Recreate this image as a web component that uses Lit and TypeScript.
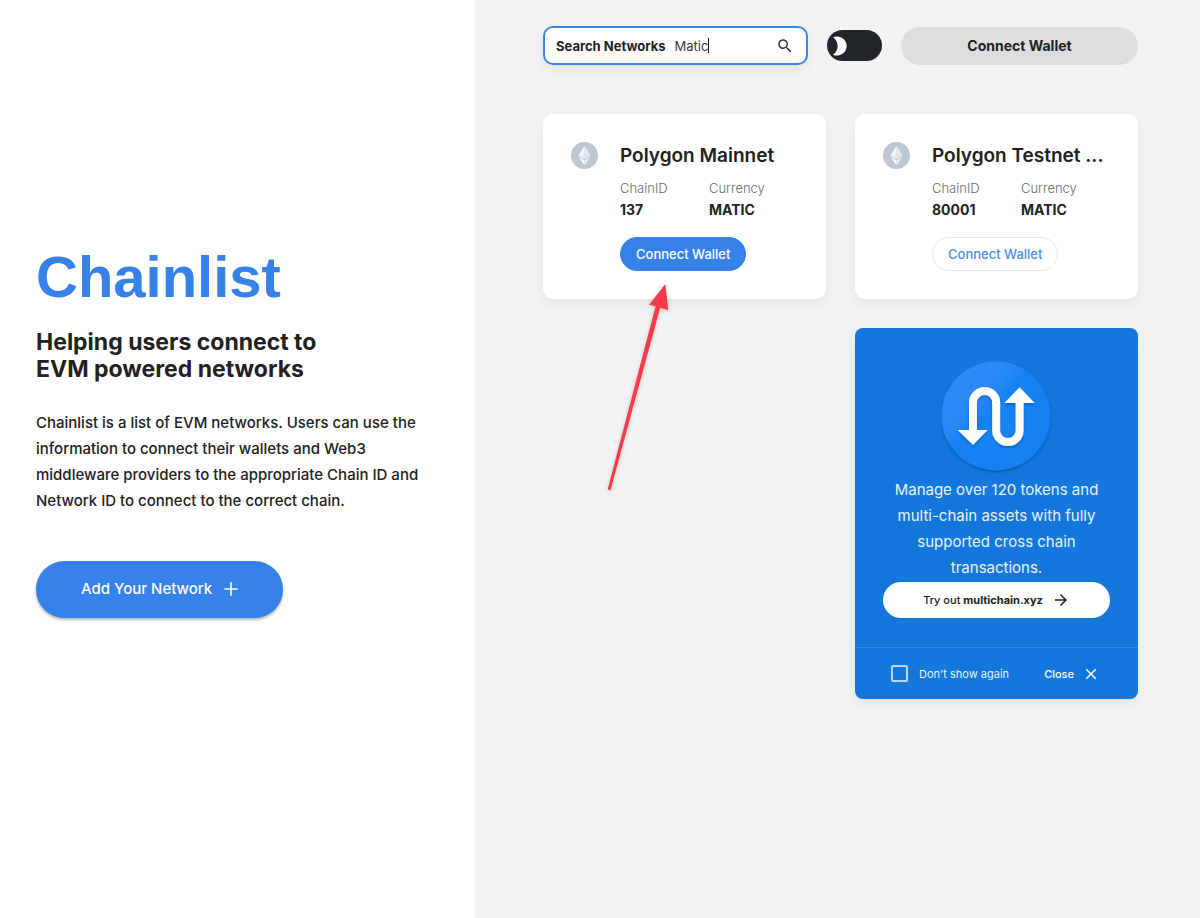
import { LitElement, html, css } from "lit";
import { customElement, property } from "lit/decorators.js";

@customElement("network-card")
class NetworkCard extends LitElement {
  @property() name = "";
  @property() chain = "";
  @property() currency = "";
  @property({ type: Boolean }) primary = false;

  static styles = css`
    :host {
      display: block;
      min-width: 0;
    }
    * {
      box-sizing: border-box;
    }
    .card {
      display: flex;
      gap: 22px;
      padding: 28px;
      background: #fff;
      border-radius: 10px;
      box-shadow: 0 5px 12px rgba(0, 0, 0, 0.06);
    }
    .coin {
      flex: none;
      width: 27px;
      height: 27px;
    }
    .body {
      flex: 1;
      min-width: 0;
    }
    .title {
      margin: 0 0 8px;
      font-size: 19px;
      line-height: 27px;
      font-weight: 600;
      white-space: nowrap;
      overflow: hidden;
      text-overflow: ellipsis;
    }
    .facts {
      display: grid;
      grid-template-columns: 1fr 1fr;
      margin: 0 0 17px;
    }
    .facts dt {
      font-size: 13px;
      line-height: 22px;
      font-weight: 300;
      color: #6d6d6d;
    }
    .facts dd {
      margin: 0;
      font-size: 14px;
      line-height: 21px;
      font-weight: 700;
    }
    .connect {
      height: 34px;
      padding: 0 15px;
      border: 1px solid #e8e8e8;
      border-radius: 17px;
      background: #fff;
      color: #4a8fee;
      font: 500 13px/20px Inter, sans-serif;
      display: block;
    }
    .connect.primary {
      background: #3682ea;
      border-color: #3682ea;
      color: #fff;
    }
  `;

  render() {
    return html`
      <article class="card">
        <svg class="coin" viewBox="0 0 27 27" aria-hidden="true">
          <circle cx="13.5" cy="13.5" r="13.5" fill="#bec5d3" />
          <path d="M13.5 3.700 7.400 13.800l6.100 3.500z" fill="#fafafa" />
          <path d="M13.5 3.700v13.600l6.100-3.500z" fill="#ececee" />
          <path d="M7.400 15 13.5 23.300v-4.900z" fill="#fafafa" />
          <path d="M13.5 18.400v4.900l6.100-8.300z" fill="#ececee" />
          <path d="m7.400 13.800 6.100-2.700v6.200z" fill="#eeeeef" />
          <path d="m13.5 11.100 6.100 2.700-6.100 3.500z" fill="#e2e3e6" />
        </svg>
        <div class="body">
          <h3 class="title">${this.name}</h3>
          <dl class="facts">
            <div><dt>ChainID</dt><dd>${this.chain}</dd></div>
            <div><dt>Currency</dt><dd>${this.currency}</dd></div>
          </dl>
          <button class="connect ${this.primary ? "primary" : ""}" type="button">Connect Wallet</button>
        </div>
      </article>
    `;
  }
}

@customElement("multichain-promo")
class MultichainPromo extends LitElement {
  static styles = css`
    :host {
      display: block;
      min-width: 0;
    }
    * {
      box-sizing: border-box;
    }
    .promo {
      background: #1377dc;
      color: #eaf3fd;
      border-radius: 8px;
      overflow: hidden;
      box-shadow: 0 5px 12px rgba(0, 0, 0, 0.06);
    }
    .main {
      display: flex;
      flex-direction: column;
      align-items: center;
      padding: 32px 28px 29px;
    }
    .logo {
      width: 112px;
      height: 117px;
      display: block;
    }
    .pitch {
      margin: 0;
      font-size: 15px;
      line-height: 26px;
      text-align: center;
      padding-bottom: 1px;
    }
    .try {
      display: flex;
      align-items: center;
      justify-content: center;
      gap: 9px;
      width: 100%;
      height: 36px;
      border-radius: 18px;
      background: #fff;
      color: #212121;
      font-size: 11px;
      font-weight: 500;
      text-decoration: none;
    }
    .try b {
      font-weight: 700;
    }
    .icon {
      width: 18px;
      height: 18px;
      display: block;
    }
    .foot {
      display: flex;
      align-items: center;
      justify-content: space-between;
      height: 52px;
      padding: 0 38px 0 36px;
      border-top: 1px solid #2e87e0;
      font-size: 11px;
    }
    .again {
      display: flex;
      align-items: center;
      gap: 11px;
    }
    .tick {
      appearance: none;
      margin: 0;
      width: 17px;
      height: 17px;
      border: 2px solid #b8d6f5;
      border-radius: 2px;
    }
    .close {
      display: flex;
      align-items: center;
      gap: 8px;
      padding: 0;
      border: 0;
      background: none;
      color: #fff;
      font: 500 11px/16px Inter, sans-serif;
    }
  `;

  render() {
    return html`
      <aside class="promo">
        <div class="main">
          <svg class="logo" viewBox="0 -1 112 117" aria-hidden="true">
            <defs>
              <linearGradient id="disc" x1="0" y1="0.1" x2="0.8" y2="0.9">
                <stop offset="0" stop-color="#2f8df5" />
                <stop offset="0.38" stop-color="#2688f4" />
                <stop offset="0.5" stop-color="#1582f2" />
                <stop offset="1" stop-color="#1582f2" />
              </linearGradient>
              <filter id="soft" x="-10%" y="-10%" width="120%" height="125%">
                <feDropShadow dx="0" dy="1.5" stdDeviation="1" flood-color="#053a75" flood-opacity="0.5" />
              </filter>
            </defs>
            <circle cx="55" cy="55" r="54.5" fill="url(#disc)" filter="url(#soft)" />
            <g filter="url(#soft)">
              <path
                d="M32 71V41.6a11.6 11.6 0 0 1 23.2 0v27.8a11.7 11.7 0 0 0 23.4 0V40"
                fill="none"
                stroke="#fff"
                stroke-width="8"
              />
              <path d="M16.7 69h30L32 84zM63.3 42h30.4L78.6 26.3z" fill="#fff" />
            </g>
          </svg>
          <p class="pitch">
            Manage over 120 tokens and multi-chain assets with fully supported cross chain transactions.
          </p>
          <a class="try" href="#multichain">
            <span>Try out <b>multichain.xyz</b></span>
            <svg class="icon" viewBox="0 0 24 24" fill="currentColor" aria-hidden="true">
              <path d="m12 4-1.41 1.41L16.17 11H4v2h12.17l-5.58 5.59L12 20l8-8z" />
            </svg>
          </a>
        </div>
        <div class="foot">
          <label class="again"><input class="tick" type="checkbox" />Don't show again</label>
          <button class="close" type="button">
            Close
            <svg class="icon" viewBox="0 0 24 24" fill="currentColor" aria-hidden="true">
              <path
                d="M19 6.41 17.59 5 12 10.59 6.41 5 5 6.41 10.59 12 5 17.59 6.41 19 12 13.41 17.59 19 19 17.59 13.41 12z"
              />
            </svg>
          </button>
        </div>
      </aside>
    `;
  }
}

@customElement("app-root")
class AppRoot extends LitElement {
  static styles = css`
    :host {
      display: block;
      font-family: Inter, sans-serif;
      color: #212121;
    }
    * {
      box-sizing: border-box;
    }
    .page {
      display: grid;
      grid-template-columns: 475fr 725fr;
      min-height: 100vh;
    }
    .intro {
      display: flex;
      flex-direction: column;
      justify-content: center;
      align-items: flex-start;
      padding: 0 36px 58px;
      background: #fff;
    }
    .brand {
      margin: 0 0 18px;
      font: 700 58px/68px "Liberation Sans", sans-serif;
      color: #3682ea;
    }
    .tagline {
      margin: 0 0 27px;
      font-size: 23px;
      line-height: 27px;
      font-weight: 700;
    }
    .about {
      margin: 0 0 47px;
      font-size: 15px;
      line-height: 26px;
      font-weight: 500;
    }
    .add {
      display: flex;
      align-items: center;
      gap: 9px;
      height: 57px;
      padding: 0 42px 0 45px;
      border: 0;
      border-radius: 29px;
      background: #3682ea;
      color: #fff;
      font: 500 15px/24px Inter, sans-serif;
      box-shadow: 0 2px 3px rgba(0, 0, 0, 0.3);
    }
    .plus {
      width: 20px;
      height: 20px;
    }
    .content {
      padding: 26px 62px 26px 68px;
      background: #f2f2f2;
    }
    .toolbar {
      display: flex;
      align-items: center;
      gap: 19px;
      margin-bottom: 49px;
    }
    .search {
      flex: 1;
      min-width: 0;
      display: flex;
      align-items: center;
      height: 39px;
      padding: 0 12px 0 11px;
      border: 2px solid #3b85ec;
      border-radius: 10px;
      background: #fff;
      box-shadow: 0 5px 12px rgba(0, 0, 0, 0.06);
      font-size: 13px;
      line-height: 20px;
    }
    .label {
      font-weight: 700;
      margin-right: 9px;
      white-space: nowrap;
    }
    .query {
      field-sizing: content;
      min-width: 0;
      padding: 0;
      border: 0;
      outline: 0;
      background: none;
      color: #3a3a3a;
      font: 400 13px/20px Inter, sans-serif;
    }
    .caret {
      width: 1px;
      height: 15px;
      background: #111;
    }
    .glass {
      width: 18px;
      height: 18px;
      margin-left: auto;
      color: #333;
    }
    .theme {
      display: flex;
      align-items: center;
      width: 55px;
      height: 31px;
      margin: 0;
      padding: 0 5px;
      border: 0;
      border-radius: 16px;
      background: #212529;
    }
    .moon {
      width: 16px;
      height: 20px;
    }
    .wallet {
      width: 237px;
      height: 38px;
      border: 0;
      border-radius: 19px;
      background: #dedede;
      color: #212121;
      font: 700 14px/20px Inter, sans-serif;
    }
    .grid {
      display: grid;
      grid-template-columns: 1fr 1fr;
      gap: 29px;
    }
    .spot {
      position: relative;
    }
    .pointer {
      position: absolute;
      left: 60px;
      top: 166px;
      width: 70px;
      height: 216px;
      overflow: visible;
      pointer-events: none;
      filter: drop-shadow(0 1px 2px rgba(0, 0, 0, 0.18));
    }
    .promo {
      grid-column: 2;
    }
  `;

  render() {
    return html`
      <div class="page">
        <section class="intro">
          <h1 class="brand">Chainlist</h1>
          <h2 class="tagline">Helping users connect to<br />EVM powered networks</h2>
          <p class="about">
            Chainlist is a list of EVM networks. Users can use the information to connect their wallets and Web3
            middleware providers to the appropriate Chain ID and Network ID to connect to the correct chain.
          </p>
          <button class="add" type="button">
            Add Your Network
            <svg class="plus" viewBox="0 0 24 24" fill="currentColor" aria-hidden="true">
              <path d="M20 13h-7v7h-2v-7H4v-2h7V4h2v7h7z" />
            </svg>
          </button>
        </section>
        <main class="content">
          <div class="toolbar">
            <div class="search">
              <label class="label" for="query">Search Networks</label>
              <input class="query" id="query" type="text" value="Matic" />
              <span class="caret"></span>
              <svg class="glass" viewBox="0 0 24 24" fill="currentColor" aria-hidden="true">
                <path
                  d="M15.5 14h-.79l-.28-.27C15.41 12.59 16 11.11 16 9.5 16 5.91 13.09 3 9.5 3S3 5.91 3 9.5 5.91 16 9.5 16c1.61 0 3.09-.59 4.23-1.57l.27.28v.79l5 4.99L20.49 19l-4.99-5zm-6 0C7.01 14 5 11.99 5 9.5S7.01 5 9.5 5 14 7.01 14 9.5 11.99 14 9.5 14z"
                />
              </svg>
            </div>
            <button class="theme" type="button" role="switch" aria-checked="false">
              <svg class="moon" viewBox="0 0 16 20" aria-hidden="true">
                <path d="M1 1.3A9.6 9.6 0 1 1 1 18.7C3 17.300 5.600 14.500 5.600 10S3 2.700 1 1.300z" fill="#fff" />
              </svg>
            </button>
            <button class="wallet" type="button">Connect Wallet</button>
          </div>
          <div class="grid">
            <div class="spot">
              <network-card name="Polygon Mainnet" chain="137" currency="MATIC" primary></network-card>
              <svg class="pointer" viewBox="0 0 70 216" aria-hidden="true">
                <path
                  d="M62.300 4 65.300 30.200 57.200 27.700 7.600 209.800Q6.200 210.800 4.800 209.100L52.600 26.300 46.200 24.700z"
                  fill="#f93a4b"
                />
              </svg>
            </div>
            <network-card name="Polygon Testnet ..." chain="80001" currency="MATIC"></network-card>
            <multichain-promo class="promo"></multichain-promo>
          </div>
        </main>
      </div>
    `;
  }
}
